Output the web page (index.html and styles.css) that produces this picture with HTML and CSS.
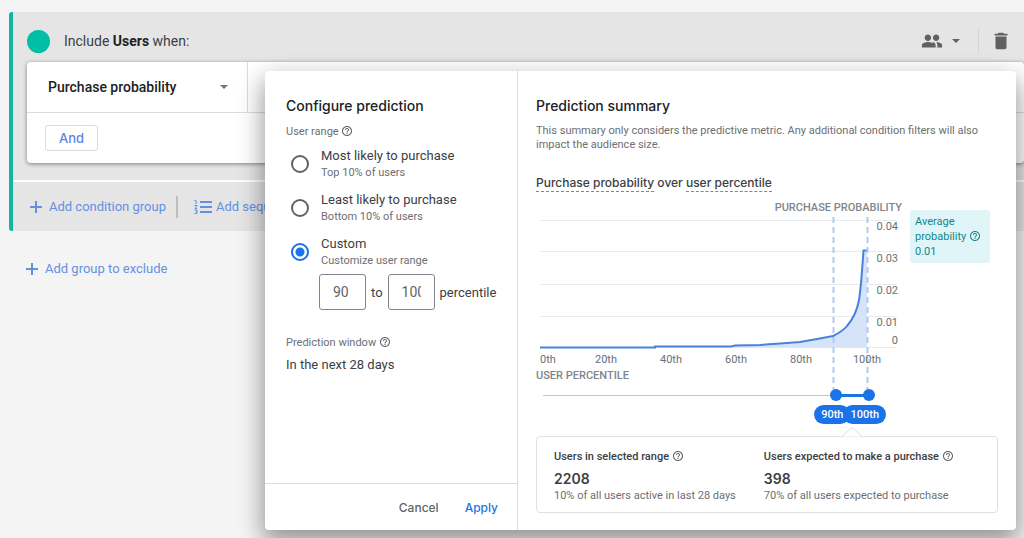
FILE: index.html
```html
<!DOCTYPE html>
<html lang="en">
<head>
  <meta charset="UTF-8">
  <meta name="viewport" content="width=device-width, initial-scale=1.0">
  <title>Audience builder - Configure prediction</title>
  <link rel="stylesheet" href="styles.css">
</head>
<body>
  <!-- Shared help icon -->
  <svg class="sprite" aria-hidden="true">
    <symbol id="help" viewBox="0 0 24 24">
      <path d="M11 18h2v-2h-2v2zm1-16C6.48 2 2 6.480 2 12s4.480 10 10 10 10-4.480 10-10S17.520 2 12 2zm0 18c-4.410 0-8-3.590-8-8s3.590-8 8-8 8 3.590 8 8-3.590 8-8 8zm0-14c-2.210 0-4 1.790-4 4h2c0-1.100.9-2 2-2s2 .9 2 2c0 2-3 1.750-3 5h2c0-2.250 3-2.500 3-5 0-2.210-1.790-4-4-4z"/>
    </symbol>
  </svg>

  <main class="builder">
    <!-- Include group -->
    <section class="group">
      <header class="group-header">
        <span class="group-dot"></span>
        <h1>Include <b>Users</b> when:</h1>
        <button type="button" class="scope-button" aria-label="Scope">
          <svg class="people" width="22" height="22" viewBox="0 0 24 24"><path d="M16.500 13c-1.200 0-3.070.34-4.500 1-1.430-.67-3.300-1-4.500-1C5.330 13 1 14.080 1 16.250V19h22v-2.750c0-2.170-4.330-3.250-6.500-3.250zM7.500 12c1.930 0 3.500-1.570 3.500-3.500S9.430 5 7.500 5 4 6.570 4 8.500 5.570 12 7.500 12zm9 0c1.930 0 3.500-1.570 3.500-3.500S18.430 5 16.500 5 13 6.570 13 8.500s1.570 3.500 3.500 3.500z"/><path class="people-gap" d="M14.600 12.600c1.500.9 2.300 2.100 2.300 3.700V19.400"/></svg>
          <svg width="8" height="4" viewBox="0 0 8 4"><path d="M0 0h8L4 4z"/></svg>
        </button>
        <button type="button" class="delete-button" aria-label="Delete group">
          <svg width="22" height="22" viewBox="0 0 24 24"><path d="M6 19c0 1.100.9 2 2 2h8c1.100 0 2-.9 2-2V7H6v12zM19 4h-3.500l-1-1h-5l-1 1H5v2h14V4z"/></svg>
        </button>
      </header>

      <div class="condition-card">
        <div class="condition-row">
          <button type="button" class="metric-button">
            Purchase probability
            <svg width="8" height="4" viewBox="0 0 8 4"><path d="M0 0h8L4 4z"/></svg>
          </button>
        </div>
        <div class="and-row">
          <button type="button" class="and-button">And</button>
        </div>
      </div>

      <footer class="group-footer">
        <button type="button" class="add-button">
          <svg width="12" height="12" viewBox="0 0 12 12"><path d="M6 0v12M0 6h12"/></svg>
          Add condition group
        </button>
        <button type="button" class="add-button sequence">
          <svg width="18" height="16" viewBox="0 0 18 16"><path d="M6 3h12M6 8h12M6 13h12"/><path class="digits" d="M0.500 1.500H2V5M0.500 6.500H3L1 9.500H3M0.500 11H3V14.500H0.500M1.500 12.800H3"/></svg>
          Add sequence
        </button>
      </footer>
    </section>

    <button type="button" class="add-button exclude">
      <svg width="12" height="12" viewBox="0 0 12 12"><path d="M6 0v12M0 6h12"/></svg>
      Add group to exclude
    </button>
  </main>

  <!-- Prediction dialog -->
  <div class="dialog" role="dialog" aria-labelledby="dialog-title">
    <form class="configure">
      <div class="configure-body">
        <h2 id="dialog-title">Configure prediction</h2>
        <p class="caption" id="range-label">User range <svg class="help"><use href="#help"/></svg></p>

        <div role="radiogroup" aria-labelledby="range-label">
          <label class="option">
            <input type="radio" name="range">
            <span>Most likely to purchase <small>Top 10% of users</small></span>
          </label>
          <label class="option">
            <input type="radio" name="range">
            <span>Least likely to purchase <small>Bottom 10% of users</small></span>
          </label>
          <label class="option">
            <input type="radio" name="range" checked>
            <span>Custom <small>Customize user range</small></span>
          </label>
        </div>

        <div class="percentiles">
          <input type="text" id="from" value="90" aria-label="From percentile">
          <label for="to">to</label>
          <input type="text" id="to" value="100">
          <span>percentile</span>
        </div>

        <p class="caption">Prediction window <svg class="help"><use href="#help"/></svg></p>
        <p class="window-value">In the next 28 days</p>
      </div>
      <div class="actions">
        <button type="button">Cancel</button>
        <button type="button" class="primary">Apply</button>
      </div>
    </form>

    <section class="summary">
      <h2>Prediction summary</h2>
      <p class="description">This summary only considers the predictive metric. Any additional condition filters will also impact the audience size.</p>
      <h3><span>Purchase probability</span> over <span>user percentile</span></h3>

      <div class="chart-row">
        <div class="chart-column">
          <svg class="chart" width="366" height="188" viewBox="0 0 366 188">
            <text class="axis-title" x="366" y="11" text-anchor="end">PURCHASE PROBABILITY</text>
            <path class="grid" d="M4 20.500H361M4 51.500H361M4 84.500H361M4 116.500H361M4 147.500H361"/>
            <path class="area" d="M4 147.500L119 147L199 146L224 145L264 142L281 139.500L297 136C303 133 307 131 311 126C317 119 321 111 323 100C325 88 326 72 327.500 50.500H331V147.500z"/>
            <path class="line" d="M4 147.500H119V146.500H195L199 145.500L224 145L244 143.500L264 142L281 139L297 136C303 133 307 131 311 126C317 119 321 111 323 100C325 88 326 72 327.500 50.500H331"/>
            <path class="limits" d="M297.500 17V190M331.500 17V190"/>
            <g text-anchor="end">
              <text x="362" y="30">0.04</text>
              <text x="362" y="62">0.03</text>
              <text x="362" y="94">0.02</text>
              <text x="362" y="126">0.01</text>
              <text x="362" y="144">0</text>
            </g>
            <g text-anchor="middle">
              <text x="12" y="163">0th</text>
              <text x="70" y="163">20th</text>
              <text x="135" y="163">40th</text>
              <text x="200" y="163">60th</text>
              <text x="265" y="163">80th</text>
              <text x="331" y="163">100th</text>
            </g>
            <text class="axis-title" x="0" y="179">USER PERCENTILE</text>
          </svg>
          <div class="slider">
            <input type="range" min="0" max="100" value="90" aria-label="Lower percentile">
            <input type="range" min="0" max="100" value="100" aria-label="Upper percentile">
          </div>
          <div class="bubbles">
            <span>90th</span>
            <span>100th</span>
          </div>
        </div>
        <div class="average">Average probability <svg class="help"><use href="#help"/></svg><br>0.01</div>
      </div>

      <div class="results">
        <svg class="notch" width="20" height="10" viewBox="0 0 20 10"><path d="M0 9.500L10 0.500L20 9.500"/></svg>
        <div>
          <h4>Users in selected range <svg class="help"><use href="#help"/></svg></h4>
          <strong>2208</strong>
          <p>10% of all users active in last 28 days</p>
        </div>
        <div>
          <h4>Users expected to make a purchase <svg class="help"><use href="#help"/></svg></h4>
          <strong>398</strong>
          <p>70% of all users expected to purchase</p>
        </div>
      </div>
    </section>
  </div>
</body>
</html>
```
FILE: styles.css
```css
* {
  box-sizing: border-box;
}
body {
  margin: 0;
  background-color: #f4f4f4;
  color: #3c4043;
  font-family: Roboto, sans-serif;
  font-size: 13px;
  overflow: hidden;
}
h1, h2, h3, h4, p {
  margin: 0;
  font-weight: 400;
}
button {
  border: none;
  background: none;
  padding: 0;
  font: inherit;
  color: inherit;
  cursor: pointer;
}
svg {
  fill: #616161;
}
.sprite {
  display: none;
}
.builder {
  padding: 12px 0 0 9px;
}

/* Include group */
.group {
  border-left: 4px solid #12b5a0;
  border-radius: 3px 0 0 3px;
  background-color: #e5e5e5;
}
.group-header {
  display: flex;
  align-items: center;
  height: 50px;
  padding: 8px 12px 0 14px;
}
.group-dot {
  width: 23px;
  height: 23px;
  margin-right: 14px;
  border-radius: 50%;
  background-color: #00bfa5;
}
.group-header h1 {
  flex: 1;
  font-size: 14px;
}
.group-header b {
  color: #202124;
}
.scope-button, .delete-button {
  display: flex;
  align-items: center;
  height: 26px;
}
.scope-button {
  gap: 9px;
  padding-right: 18px;
}
.delete-button {
  padding-left: 11px;
  border-left: 1px solid #d5d5d5;
}
.people-gap {
  fill: none;
  stroke: #e5e5e5;
  stroke-width: 2;
}
.condition-card {
  margin-left: 14px;
  border-radius: 4px;
  background-color: #fff;
  box-shadow: 0 1px 4px rgba(0, 0, 0, 0.45);
}
.condition-row {
  border-bottom: 1px solid #dadce0;
}
.metric-button {
  display: flex;
  align-items: center;
  justify-content: space-between;
  width: 221px;
  height: 50px;
  padding: 0 19px 0 21px;
  border-right: 1px solid #dadce0;
  color: #202124;
  font-size: 14px;
  font-weight: 500;
}
.metric-button svg {
  fill: #757575;
}
.and-row {
  padding: 12px 18px;
}
.and-button {
  width: 53px;
  height: 26px;
  border: 1px solid #dadce0;
  border-radius: 3px;
  color: #5b87e0;
  font-family: Inter, sans-serif;
  font-weight: 500;
}
.group-footer {
  display: flex;
  align-items: center;
  height: 51px;
  margin-top: 17px;
  padding-left: 17px;
  border-top: 2px solid #fff;
}
.add-button {
  display: flex;
  align-items: center;
  gap: 7px;
  color: #6490e2;
  white-space: nowrap;
}
.add-button svg {
  fill: none;
  stroke: #6490e2;
  stroke-width: 2;
}
.add-button .digits {
  stroke-width: 1;
}
.sequence {
  gap: 4px;
  height: 22px;
  margin-left: 10px;
  padding-left: 16px;
  border-left: 2px solid #bdbdbd;
}
.exclude {
  margin: 30px 0 0 17px;
}

/* Dialog */
.dialog {
  position: absolute;
  top: 71px;
  left: 265px;
  right: 8px;
  display: flex;
  border-radius: 4px;
  background-color: #fff;
  box-shadow: 0 10px 24px 2px rgba(0, 0, 0, 0.4);
}
h2 {
  color: #202124;
  font-family: Inter, sans-serif;
  font-size: 14px;
  font-weight: 500;
  line-height: 20px;
}
.help {
  width: 12px;
  height: 12px;
  vertical-align: -2px;
}
.configure {
  display: flex;
  flex-direction: column;
  width: 253px;
  border-right: 1px solid #dadce0;
}
.configure-body {
  flex: 1;
  padding: 25px 21px 0;
}
.caption {
  margin: 8px 0 2px;
  color: #6b6f74;
  font-size: 11px;
  line-height: 16px;
}
.option {
  display: flex;
  align-items: center;
  gap: 12px;
  height: 44px;
  padding-left: 5px;
  line-height: 18px;
}
.option input {
  appearance: none;
  width: 18px;
  height: 18px;
  margin: 0;
  border: 2px solid #5f6368;
  border-radius: 50%;
}
.option input:checked {
  border-color: #1a73e8;
  background: radial-gradient(circle, #1a73e8 4px, #fff 5px);
}
.option small {
  display: block;
  color: #6b6f74;
  font-size: 11px;
  line-height: 16px;
}
.percentiles {
  display: flex;
  align-items: center;
  gap: 5px;
  margin-bottom: 25px;
  padding-left: 33px;
}
.percentiles input {
  width: 47px;
  height: 36px;
  padding: 0 13px;
  border: 1px solid #80868b;
  border-radius: 3px;
  color: #5f6368;
  font: inherit;
  font-size: 14px;
}
.window-value {
  margin-top: 4px;
  line-height: 20px;
}
.actions {
  display: flex;
  align-items: center;
  justify-content: flex-end;
  gap: 26px;
  height: 47px;
  padding-right: 19px;
  border-top: 1px solid #dadce0;
  color: #5f6368;
  font-family: Inter, sans-serif;
  font-size: 12px;
  font-weight: 500;
}
.actions .primary {
  color: #1a73e8;
}

/* Summary */
.summary {
  flex: 1;
  padding: 25px 18px 17px;
}
.description {
  margin-top: 8px;
  color: #6b6f74;
  font-size: 11px;
  line-height: 14px;
}
h3 {
  margin: 21px 0 7px;
  font-family: Inter, sans-serif;
  font-size: 12px;
  font-weight: 500;
  line-height: 20px;
}
h3 span {
  padding-bottom: 1px;
  border-bottom: 1px dashed #80868b;
}
.chart-row {
  display: flex;
  align-items: flex-start;
  gap: 8px;
}
.chart {
  display: block;
  overflow: visible;
  font-size: 11px;
}
.chart text {
  fill: #6b6f74;
}
.chart .axis-title {
  fill: #80868b;
  font-weight: 500;
}
.grid {
  stroke: #e8eaed;
}
.area {
  fill: #d6e4fa;
}
.line {
  fill: none;
  stroke: #4a82db;
  stroke-width: 2;
}
.limits {
  stroke: #b0c9f0;
  stroke-width: 2;
  stroke-dasharray: 6 4;
}
.slider {
  position: relative;
  width: 339px;
  height: 14px;
  background:
    linear-gradient(#1a73e8, #1a73e8) 300px 6px / 32px 3px no-repeat,
    linear-gradient(#c4c7cb, #c4c7cb) 7px 7px / 293px 1px no-repeat;
}
.slider input {
  position: absolute;
  inset: 0;
  appearance: none;
  width: 100%;
  height: 14px;
  margin: 0;
  background: none;
  pointer-events: none;
}
.slider input::-webkit-slider-thumb {
  appearance: none;
  width: 12px;
  height: 12px;
  border-radius: 50%;
  background-color: #1a73e8;
  pointer-events: auto;
}
.bubbles {
  display: flex;
  justify-content: flex-end;
  margin-top: 3px;
  padding-right: 16px;
}
.bubbles span {
  padding: 0 7px;
  border-radius: 10px;
  background-color: #1a73e8;
  color: #fff;
  font-size: 11px;
  font-weight: 500;
  line-height: 19px;
}
.bubbles span + span {
  margin-left: -7px;
}
.average {
  width: 80px;
  margin-top: 10px;
  padding: 4px 5px;
  border-radius: 3px;
  background-color: #e0f5f8;
  color: #12858b;
  font-size: 11px;
  line-height: 15px;
}
.average .help {
  fill: #12858b;
}
.results {
  position: relative;
  display: grid;
  grid-template-columns: 9fr 10fr;
  margin-top: 12px;
  padding: 12px 0 8px 17px;
  border: 1px solid #e0e0e0;
  border-radius: 4px;
}
.notch {
  position: absolute;
  top: -10px;
  left: 305px;
  fill: #fff;
  stroke: #dadce0;
}
h4 {
  margin-bottom: 4px;
  font-size: 11px;
  font-weight: 500;
  line-height: 16px;
}
.results strong {
  display: block;
  font-family: Inter, sans-serif;
  font-size: 14px;
  font-weight: 600;
  line-height: 19px;
}
.results p {
  color: #6b6f74;
  font-size: 11px;
  line-height: 16px;
}
```
